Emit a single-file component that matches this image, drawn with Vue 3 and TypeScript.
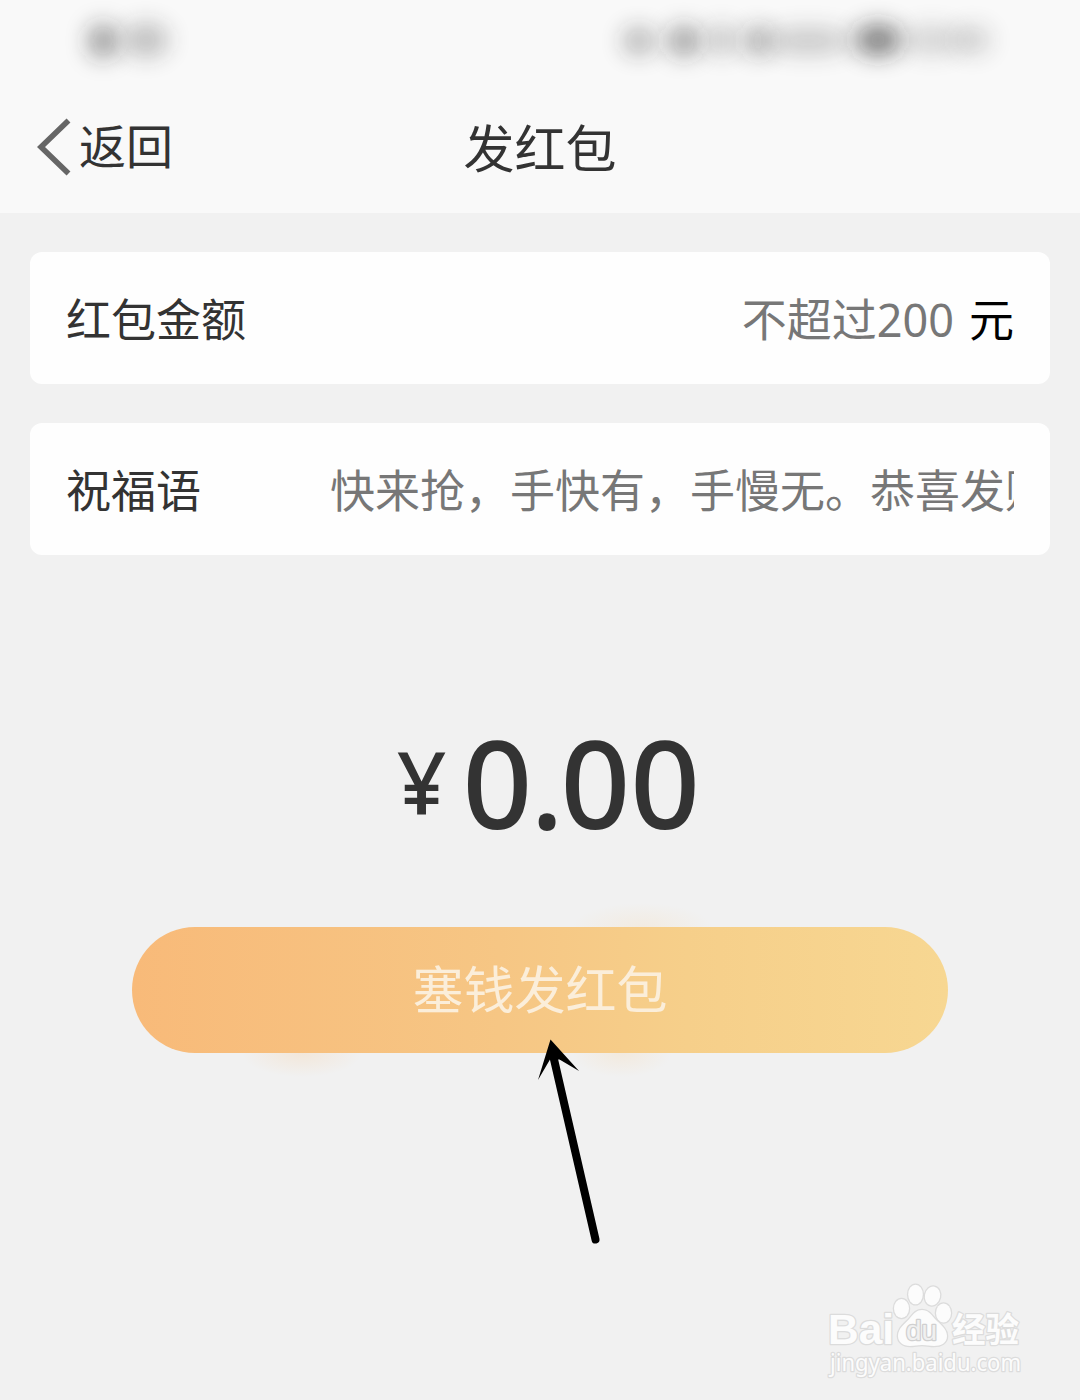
<script setup lang="ts">
import { computed, ref } from 'vue'

interface Blob {
  x: number
  y: number
  rx: number
  ry: number
  opacity: number
}

const amount = ref('')
const greeting = ref('')
const total = ref(0)
const parts = computed(() => total.value.toFixed(2).split('.'))

// Obscured clock and system indicators
const blobs: Blob[] = [
  { x: 103, y: 41, rx: 13, ry: 16, opacity: 0.56 },
  { x: 146, y: 40, rx: 22, ry: 16, opacity: 0.3 },
  { x: 639, y: 41, rx: 15, ry: 12, opacity: 0.42 },
  { x: 684, y: 41, rx: 14, ry: 14, opacity: 0.54 },
  { x: 722, y: 40, rx: 15, ry: 14, opacity: 0.28 },
  { x: 758, y: 41, rx: 11, ry: 14, opacity: 0.46 },
  { x: 808, y: 41, rx: 44, ry: 12, opacity: 0.25 },
  { x: 878, y: 40, rx: 22, ry: 14, opacity: 0.68 },
  { x: 932, y: 40, rx: 30, ry: 14, opacity: 0.18 },
  { x: 972, y: 40, rx: 18, ry: 13, opacity: 0.22 }
]
</script>

<template>
  <main class="page">
    <header class="header">
      <svg class="status" viewBox="0 0 1080 90" aria-hidden="true">
        <defs>
          <filter id="soften" x="-200%" y="-200%" width="500%" height="500%">
            <feGaussianBlur stdDeviation="12" />
          </filter>
        </defs>
        <ellipse
          v-for="(b, i) in blobs"
          :key="i"
          :cx="b.x"
          :cy="b.y"
          :rx="b.rx"
          :ry="b.ry"
          :opacity="b.opacity"
          fill="#222"
          filter="url(#soften)"
        />
      </svg>
      <nav class="nav">
        <button class="back" type="button">
          <svg class="chevron" viewBox="0 0 34 58" aria-hidden="true">
            <path d="M31.500 2.500 L4 29 L31.500 55.500" fill="none" stroke="#666" stroke-width="5.6" />
          </svg>
          <span>返回</span>
        </button>
        <h1 class="title">发红包</h1>
      </nav>
    </header>

    <section class="form">
      <label class="row">
        <span class="label">红包金额</span>
        <span class="field">{{ amount || '不超过200' }}</span>
        <span class="unit">元</span>
      </label>
      <label class="row">
        <span class="label">祝福语</span>
        <span class="field message">{{ greeting || '快来抢，手快有，手慢无。恭喜发财' }}</span>
      </label>
    </section>

    <section class="total">
      <span class="currency">¥</span>
      <span class="number">{{ parts[0] }}<span class="point">.</span>{{ parts[1] }}</span>
    </section>

    <button class="submit" type="button">塞钱发红包</button>

    <svg class="pointer" viewBox="0 0 110 240" aria-hidden="true">
      <path d="M33 35 L75.500 219.500" stroke="#000" stroke-width="8" stroke-linecap="round" />
      <path d="M30.500 19.500 L59 51 L39.500 39.500 L30 39.500 L18 60 Z" fill="#000" />
    </svg>

    <svg class="watermark" viewBox="0 0 230 120">
      <g class="mark">
        <text x="18" y="73.500" class="brand" textLength="66" lengthAdjust="spacingAndGlyphs">Bai</text>
        <ellipse cx="91.500" cy="38.500" rx="7.500" ry="9.500" />
        <ellipse cx="105.500" cy="24.500" rx="7.300" ry="9.800" />
        <ellipse cx="122.500" cy="26" rx="7.600" ry="9.500" transform="rotate(12 122.500 26)" />
        <ellipse cx="133.500" cy="43" rx="7.500" ry="9.500" />
        <path d="M112 40 C118 40 121 44 125 49 C130 54 137 59 137 66 C137 73 131 76 124 76 C119 76 117 75 112 75 C107 75 105 76 100 76 C93 76 88 72 88 66 C88 58 95 54 100 48 C104 43 107 40 112 40 Z" />
        <text x="96" y="70" class="du" textLength="31" lengthAdjust="spacingAndGlyphs">du</text>
        <text x="142" y="72" class="product" textLength="67" lengthAdjust="spacingAndGlyphs">经验</text>
        <text x="20" y="100.500" class="site" textLength="191" lengthAdjust="spacingAndGlyphs">jingyan.baidu.com</text>
      </g>
    </svg>
  </main>
</template>

<style>
body {
  margin: 0;
  background: #f1f1f1;
}
</style>

<style scoped>
.page {
  position: relative;
  isolation: isolate;
  box-sizing: border-box;
  width: 1080px;
  height: 1400px;
  overflow: hidden;
  display: flex;
  flex-direction: column;
  background: #f1f1f1;
  color: #333;
  font-family: 'Noto Sans', 'Noto Sans CJK SC', sans-serif;
}

button {
  border: 0;
  padding: 0;
  font: inherit;
}

.header {
  flex: none;
  height: 213px;
  background: #f9f9f9;
  display: flex;
  flex-direction: column;
}

.status {
  flex: none;
  width: 1080px;
  height: 90px;
  overflow: visible;
}

.nav {
  height: 114px;
  display: grid;
  grid-template-columns: 1fr auto 1fr;
  align-items: center;
}

.back {
  display: flex;
  align-items: center;
  justify-self: start;
  gap: 8px;
  margin-left: 37px;
  background: none;
  color: #333;
  font-size: 47px;
  line-height: 60px;
}

.back span {
  padding-bottom: 2px;
}

.chevron {
  width: 34px;
  height: 58px;
}

.title {
  margin: 0;
  font-size: 51px;
  font-weight: 400;
  line-height: 70px;
  padding-top: 2px;
}

.form {
  display: flex;
  flex-direction: column;
  gap: 39px;
  padding: 39px 30px 0;
}

.row {
  box-sizing: border-box;
  height: 132px;
  padding: 3px 36px 0;
  border-radius: 12px;
  background: #fefefe;
  display: flex;
  align-items: center;
  font-size: 45px;
  line-height: 66px;
}

.label {
  flex: none;
}

.field {
  flex: 1;
  text-align: right;
  color: #777;
  white-space: nowrap;
  overflow: hidden;
}

.message {
  margin-left: 129px;
  text-align: left;
}

.unit {
  margin-left: 15px;
  color: #000;
}

.total {
  height: 170px;
  margin-top: 142px;
  padding-left: 17px;
  display: flex;
  justify-content: center;
  align-items: flex-start;
  gap: 16px;
  font-weight: 500;
}

.currency {
  font-size: 87px;
  line-height: 169px;
}

.number {
  font-size: 122px;
  line-height: 171px;
}

.point {
  margin: 0 -3px 0 -2px;
}

.submit {
  position: relative;
  align-self: center;
  width: 816px;
  height: 126px;
  margin-top: 60px;
  padding-bottom: 3px;
  border-radius: 63px;
  background: linear-gradient(90deg, #f8ba79, #f6c684 45%, #f6cf8a 68%, #f7d792);
  color: #fbeeda;
  font-size: 51px;
  line-height: 120px;
}

.submit::before {
  content: '';
  position: absolute;
  inset: -30px 0;
  z-index: -1;
  background:
    radial-gradient(60px 24px at 170px 156px, rgba(248, 190, 125, 0.2), transparent),
    radial-gradient(50px 24px at 490px 156px, rgba(248, 200, 135, 0.18), transparent),
    radial-gradient(70px 24px at 510px 30px, rgba(248, 205, 145, 0.16), transparent);
}

.pointer {
  position: absolute;
  left: 520px;
  top: 1020px;
  width: 110px;
  height: 240px;
}

.watermark {
  position: absolute;
  left: 810px;
  top: 1270px;
  width: 230px;
  height: 120px;
}

.mark {
  fill: #fcfcfc;
  stroke: #dcdcdc;
  stroke-width: 2.6px;
  stroke-linejoin: round;
  paint-order: stroke;
}

.brand {
  font: 700 42px 'Liberation Sans', sans-serif;
}

.du {
  font: 400 27px 'Liberation Sans', sans-serif;
  fill: #f0f0f0;
  stroke: #d0d0d0;
}

.product {
  font: 700 34px 'Noto Sans CJK SC', sans-serif;
}

.site {
  font: 400 23px 'Noto Sans', sans-serif;
}
</style>
